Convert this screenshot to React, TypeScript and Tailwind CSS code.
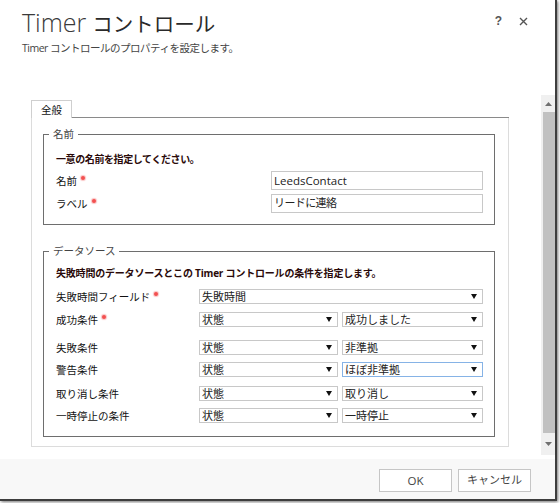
import React from "react";

const ui = "font-['Open_Sans','Noto_Sans_CJK_JP',sans-serif]";

function Req() {
  return <span className="inline-block ml-[4px] w-[4px] h-[4px] rounded-full bg-[#f25050] relative top-[-3px] shadow-[0_0_1px_1px_rgba(242,80,80,0.35)]" />;
}

function Arrow() {
  return (
    <svg width="6" height="5" viewBox="0 0 6 5" className="shrink-0">
      <polygon points="0,0 6,0 3,5" fill="#111" />
    </svg>
  );
}

function Select({ value, w, focused }: { value: string; w: string; focused?: boolean }) {
  return (
    <div
      className={
        "flex items-center h-[15px] border bg-white pl-[2px] pr-[5px] " +
        (focused ? "border-[#86b3e6] " : "border-[#c8c8c8] ") +
        w
      }
    >
      <span className="flex-1 text-[11px] leading-[13px] text-[#222] whitespace-nowrap overflow-hidden">{value}</span>
      <Arrow />
    </div>
  );
}

function Row({
  label,
  req,
  mt,
  children,
}: {
  label: string;
  req?: boolean;
  mt: string;
  children: React.ReactNode;
}) {
  return (
    <div className={"flex items-center " + mt}>
      <div className="w-[143px] text-[10.5px] leading-[14px] text-[#111] flex items-center whitespace-nowrap">
        {label}
        {req && <Req />}
      </div>
      <div className="flex gap-[4px]">{children}</div>
    </div>
  );
}

export default function App() {
  return (
    <div className={"w-[560px] h-[503px] bg-white " + ui}>
      <div className="w-[557px] h-[501px] bg-white border-r-2 border-b-2 border-[#3e3e3e] shadow-[1px_1px_3px_rgba(0,0,0,0.55)] flex flex-col">
        {/* header */}
        <div className="h-[95px] shrink-0 flex">
          <div className="flex-1 pl-[22px]">
            <div className="mt-[8px] h-[28px] flex items-baseline leading-[28px]">
              <span className="text-[25px] font-light text-[#3a3a3a] font-['Open_Sans',sans-serif]">Timer</span>
              <span className="ml-[6px] text-[20.5px] text-[#2a2a2a] font-['Noto_Sans_CJK_JP',sans-serif]">コントロール</span>
            </div>
            <div className="mt-[5px] text-[10.5px] leading-[14px] tracking-[-0.5px] text-[#444]">
              Timer コントロールのプロパティを設定します。
            </div>
          </div>
          <div className="flex items-start pt-[14px] pr-[27px] gap-[17px] text-[#555]">
            <span className="text-[12px] leading-[14px] font-semibold font-['Liberation_Sans',sans-serif]">?</span>
            <svg width="9" height="9" viewBox="0 0 9 9" className="mt-[3px]">
              <path d="M1 1 L8 8 M8 1 L1 8" stroke="#555" strokeWidth="1.4" />
            </svg>
          </div>
        </div>

        {/* body */}
        <div className="h-[364px] shrink-0 flex">
          <div className="w-[541px] pl-[31px] pt-[5px]">
            {/* tab row */}
            <div className="flex w-[478px] h-[18px]">
              <div className="w-[41px] h-[18px] border-l border-t border-r border-[#cfcfcf] bg-white flex items-center justify-center text-[10.5px] leading-[14px] text-[#111]">
                全般
              </div>
              <div className="flex-1 h-[18px] border-b border-[#8a8a8a]" />
            </div>
            {/* panel */}
            <div className="w-[478px] border-l border-r border-b border-[#dcdcdc] pl-[11px] pr-[13px] pt-[9px] pb-[9px]">
              <fieldset className="w-[452px] border border-[#6e6e6e] pl-[12px] pr-[11px] pt-[11px] pb-[11px]">
                <legend className="-ml-[7px] px-[4px] text-[10.5px] leading-[14px] text-[#444]">名前</legend>
                <div className="text-[10px] leading-[14px] font-bold text-[#2a0a0a] tracking-[-0.4px]">
                  一意の名前を指定してください。
                </div>
                <div className="flex items-center mt-[5px]">
                  <div className="w-[215px] text-[10.5px] leading-[14px] text-[#111] flex items-center">
                    名前
                    <Req />
                  </div>
                  <div className="w-[212px] h-[19px] border border-[#c8c8c8] flex items-center pl-[2px] text-[11.5px] text-[#222]">
                    LeedsContact
                  </div>
                </div>
                <div className="flex items-center mt-[4px]">
                  <div className="w-[215px] text-[10.5px] leading-[14px] text-[#111] flex items-center">
                    ラベル
                    <Req />
                  </div>
                  <div className="w-[212px] h-[19px] border border-[#c8c8c8] flex items-center pl-[2px] text-[11px] tracking-[-0.6px] text-[#222]">
                    リードに連絡
                  </div>
                </div>
              </fieldset>

              <fieldset className="mt-[19px] w-[452px] border border-[#6e6e6e] pl-[12px] pr-[11px] pt-[8px] pb-[13px]">
                <legend className="-ml-[7px] px-[4px] text-[10.5px] leading-[14px] text-[#444]">データソース</legend>
                <div className="text-[10px] leading-[14px] font-bold text-[#2a0a0a] tracking-[-0.2px] whitespace-nowrap">
                  失敗時間のデータソースとこの Timer コントロールの条件を指定します。
                </div>
                <Row label="失敗時間フィールド" req mt="mt-[9px]">
                  <Select value="失敗時間" w="w-[284px]" />
                </Row>
                <Row label="成功条件" req mt="mt-[8px]">
                  <Select value="状態" w="w-[139px]" />
                  <Select value="成功しました" w="w-[141px]" />
                </Row>
                <Row label="失敗条件" mt="mt-[13px]">
                  <Select value="状態" w="w-[139px]" />
                  <Select value="非準拠" w="w-[141px]" />
                </Row>
                <Row label="警告条件" mt="mt-[7px]">
                  <Select value="状態" w="w-[139px]" />
                  <Select value="ほぼ非準拠" w="w-[141px]" focused />
                </Row>
                <Row label="取り消し条件" mt="mt-[9px]">
                  <Select value="状態" w="w-[139px]" />
                  <Select value="取り消し" w="w-[141px]" />
                </Row>
                <Row label="一時停止の条件" mt="mt-[7px]">
                  <Select value="状態" w="w-[139px]" />
                  <Select value="一時停止" w="w-[141px]" />
                </Row>
              </fieldset>
            </div>
          </div>
          {/* scrollbar */}
          <div className="w-[14px] h-[360px] bg-[#f0f0f0] flex flex-col items-end">
            <div className="h-[17px] w-[14px] flex items-center justify-center">
              <svg width="7" height="4" viewBox="0 0 7 4">
                <polygon points="0,4 7,4 3.5,0" fill="#707070" />
              </svg>
            </div>
            <div className="w-[12px] h-[321px] bg-[#c1c1c1]" />
            <div className="h-[22px] w-[14px] flex items-center justify-center">
              <svg width="7" height="4" viewBox="0 0 7 4">
                <polygon points="0,0 7,0 3.5,4" fill="#707070" />
              </svg>
            </div>
          </div>
        </div>

        {/* footer */}
        <div className="flex-1 bg-[#f8f8f8] flex justify-end items-start pt-[10px] pr-[24px] gap-[6px]">
          <button className="w-[73px] h-[23px] bg-white border border-[#c6c6c6] text-[11.5px] text-[#444]">OK</button>
          <button className="w-[73px] h-[23px] bg-white border border-[#c6c6c6] text-[11px] text-[#444]">キャンセル</button>
        </div>
      </div>
    </div>
  );
}
